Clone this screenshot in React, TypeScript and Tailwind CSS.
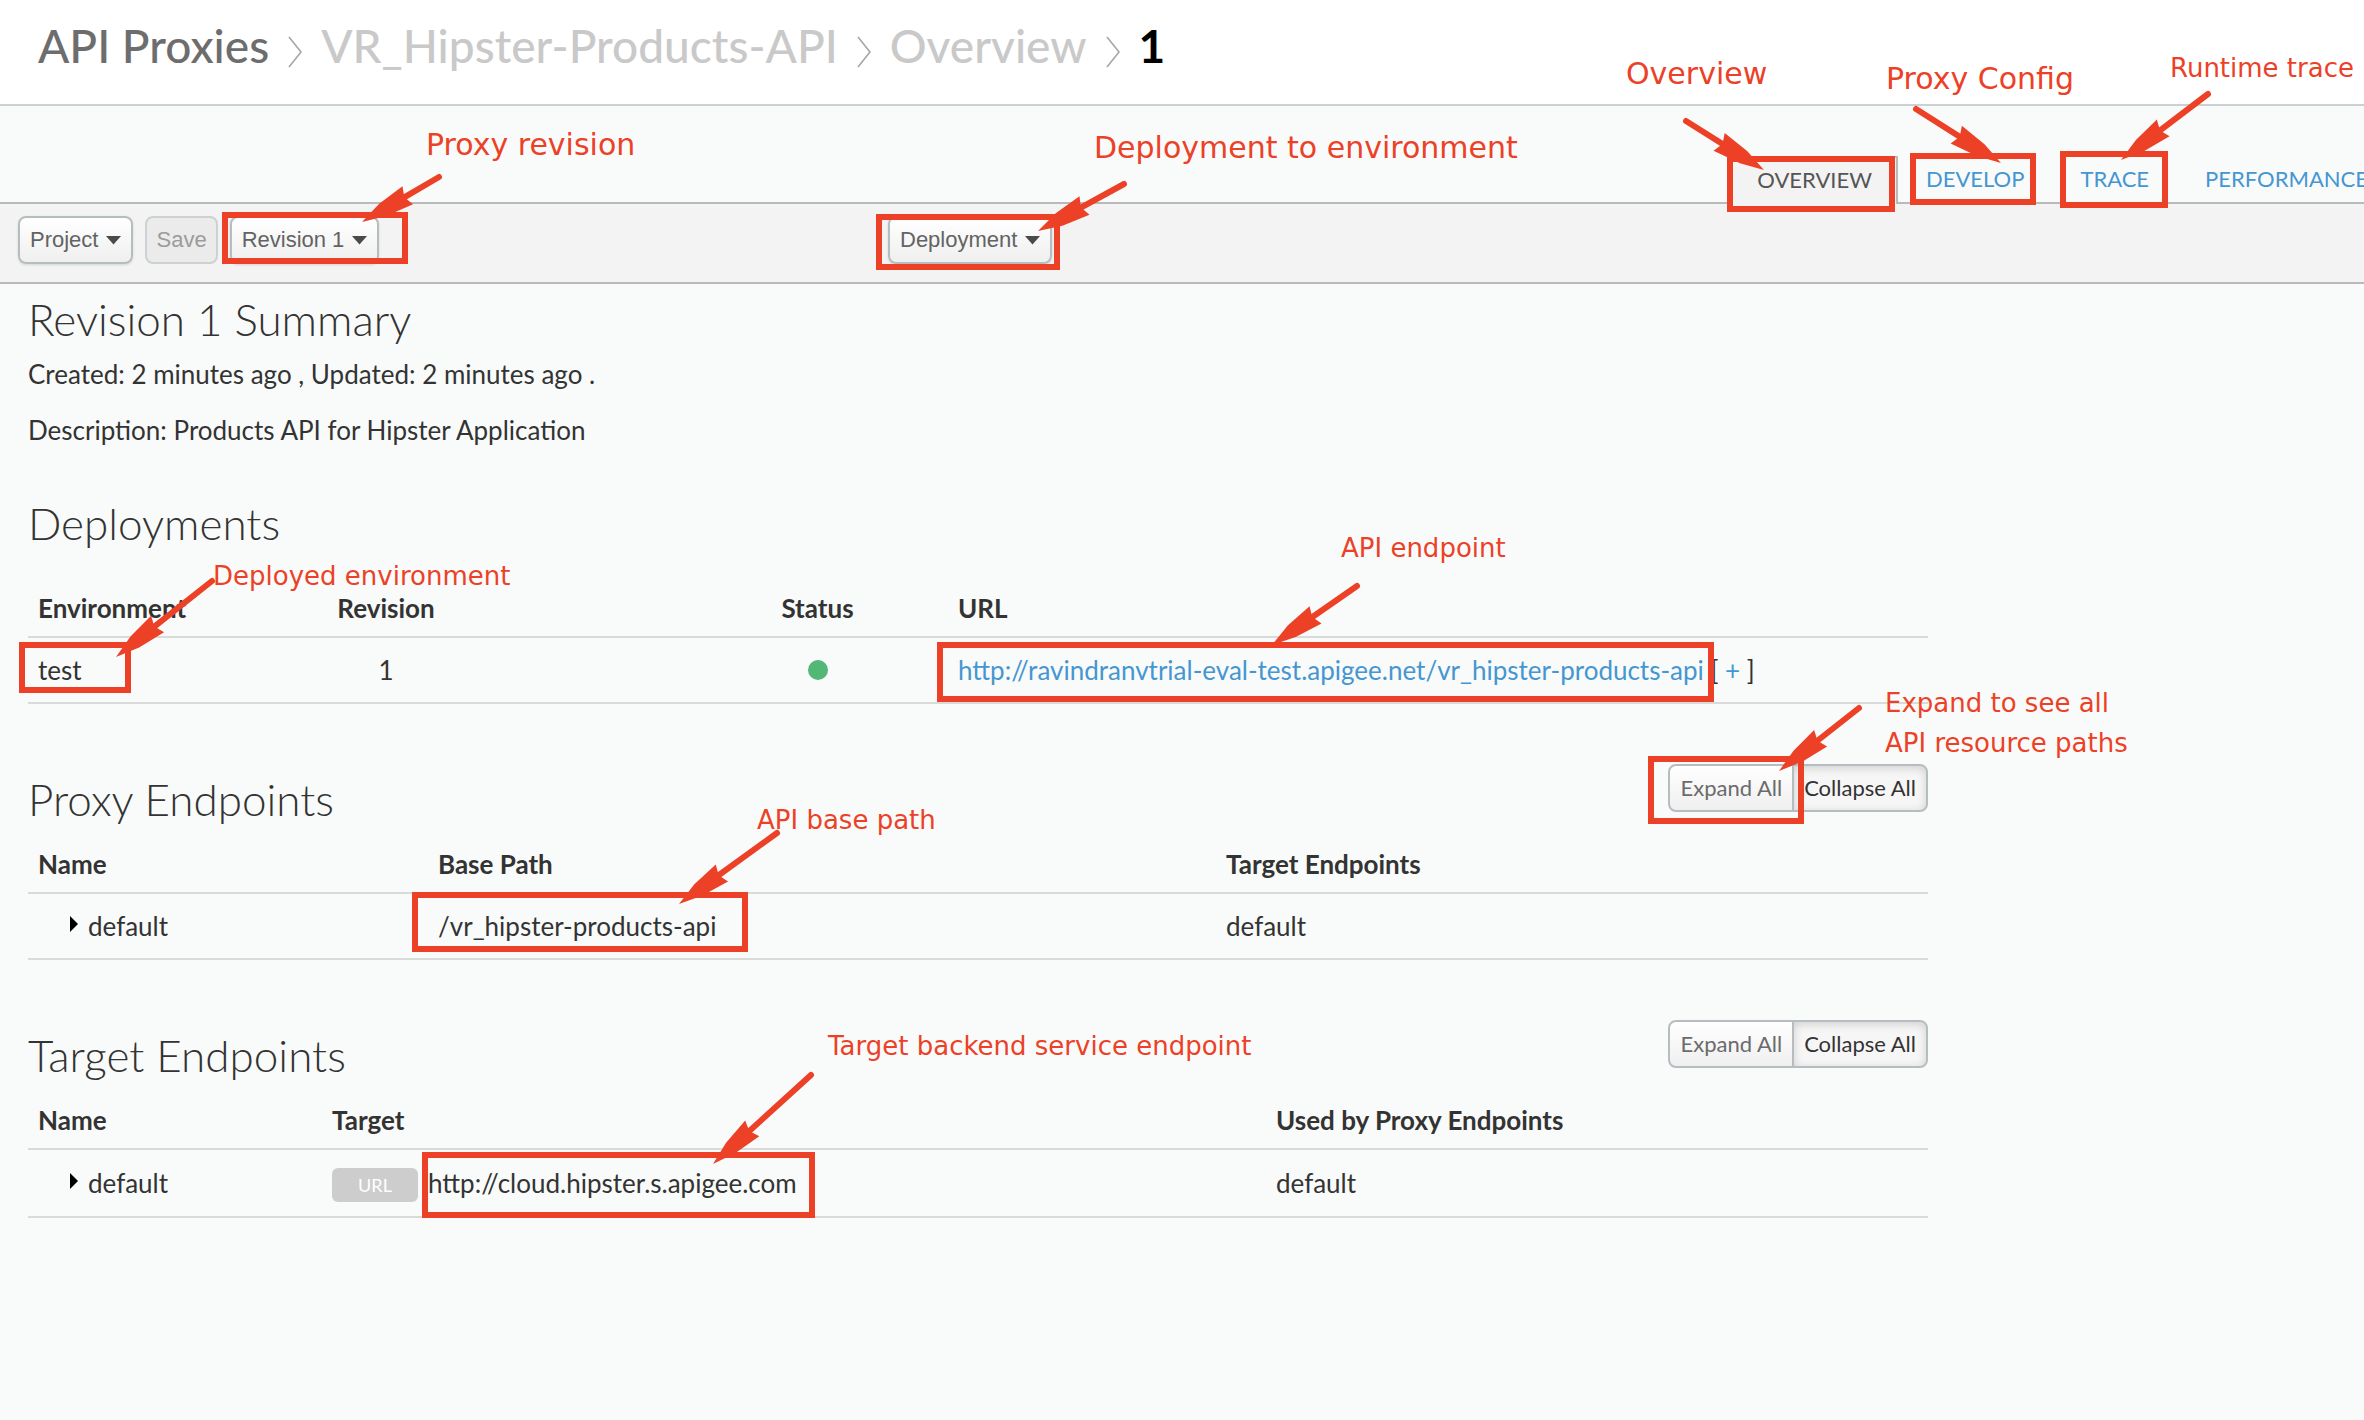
import type { ReactNode } from "react";

function Chevron() {
  return (
    <svg className="mt-3 mr-[18px] ml-[18px] shrink-0" width="16" height="32" viewBox="0 0 16 32" aria-hidden="true">
      <path d="M2 1 14 16 2 31" fill="none" stroke="#a6a6a6" strokeWidth="1.6" />
    </svg>
  );
}

function MenuButton({ label }: { label: string }) {
  return (
    <button
      type="button"
      aria-haspopup="menu"
      className="flex h-12 items-center gap-2 rounded-lg border-2 border-[#b6bdc0] bg-linear-to-b from-white to-[#efefef] px-2.5 text-[#636363] shadow-sm"
    >
      {label}
      <svg width="15" height="9" viewBox="0 0 15 9" aria-hidden="true">
        <path d="M0 0H15L7.5 8.5Z" fill="#4a4a4a" />
      </svg>
    </button>
  );
}

function SectionHeading({ title }: { title: string }) {
  return (
    <div className="mt-[60px] flex h-[63px] items-start justify-between">
      <h2 className="self-end text-[44px] leading-[56px] font-light">{title}</h2>
      <div className="flex text-[22px] leading-7">
        <button
          type="button"
          className="h-12 rounded-l-lg border-2 border-[#b6bdc0] bg-linear-to-b from-white to-[#efefef] px-2.5 text-[#6b6b6b]"
        >
          Expand All
        </button>
        <button
          type="button"
          className="-ml-0.5 h-12 rounded-r-lg border-2 border-[#b6bdc0] bg-[#f7f6f7] px-2.5 text-[#333] shadow-[inset_0_2px_10px_rgba(0,0,0,0.16)]"
        >
          Collapse All
        </button>
      </div>
    </div>
  );
}

const tableStyle = "w-full table-fixed border-collapse text-left";
const headRow = "border-b-2 border-[#d9dbdb]";
const th = "px-2.5 pb-2.5 font-bold";
const td = "px-2.5 py-3.5";

function Disclosure({ children }: { children: ReactNode }) {
  return (
    <button type="button" aria-expanded="false" className="flex items-center gap-2.5 pl-8">
      <svg className="mb-1" width="8" height="16" viewBox="0 0 8 16" aria-hidden="true">
        <path d="M0 0 8 8 0 16Z" fill="#000" />
      </svg>
      {children}
    </button>
  );
}

const boxes = [
  "left-[222px] top-[212px] h-[52px] w-[186px]",
  "left-[876px] top-[214px] h-[56px] w-[184px]",
  "left-[1727px] top-[156px] h-[56px] w-[168px]",
  "left-[1910px] top-[153px] h-[52px] w-[126px]",
  "left-[2060px] top-[151px] h-[57px] w-[108px]",
  "left-[19px] top-[642px] h-[51px] w-[112px]",
  "left-[937px] top-[642px] h-[60px] w-[777px]",
  "left-[1648px] top-[756px] h-[68px] w-[156px]",
  "left-[412px] top-[892px] h-[60px] w-[336px]",
  "left-[422px] top-[1152px] h-[66px] w-[393px]",
];

const notes = [
  { text: "Proxy revision", at: "left-[426px] top-[127px] text-[30px]" },
  { text: "Deployment to environment", at: "left-[1094px] top-[130px] text-[30px]" },
  { text: "Overview", at: "left-[1626px] top-[56px] text-[30px]" },
  { text: "Proxy Config", at: "left-[1886px] top-[61px] text-[30px]" },
  { text: "Runtime trace", at: "left-[2170px] top-[50px] text-[26px]" },
  { text: "Deployed environment", at: "left-[213px] top-[558px] text-[26px]" },
  { text: "API endpoint", at: "left-[1341px] top-[530px] text-[26px]" },
  { text: "API base path", at: "left-[757px] top-[802px] text-[26px]" },
  { text: "Expand to see all", at: "left-[1885px] top-[685px] text-[26px]" },
  { text: "API resource paths", at: "left-[1885px] top-[725px] text-[26px]" },
  { text: "Target backend service endpoint", at: "left-[828px] top-[1028px] text-[26px]" },
];

// Each arrow runs from its tail (x1, y1) to its tip (x2, y2).
const arrows = [
  [439, 177, 362, 222],
  [1124, 184, 1038, 231],
  [1686, 121, 1764, 170],
  [1916, 109, 2001, 163],
  [2208, 94, 2121, 160],
  [212, 581, 116, 657],
  [1357, 586, 1272, 645],
  [777, 833, 679, 904],
  [1859, 708, 1779, 771],
  [811, 1075, 713, 1164],
];

function Arrow({ points }: { points: number[] }) {
  const [x1, y1, x2, y2] = points;
  const length = Math.hypot(x2 - x1, y2 - y1);
  const ux = (x2 - x1) / length;
  const uy = (y2 - y1) / length;
  const at = (back: number, side: number) => `${x2 - ux * back - uy * side},${y2 - uy * back + ux * side}`;
  return (
    <g>
      <line x1={x1} y1={y1} x2={x2 - ux * 40} y2={y2 - uy * 40} stroke="#ec4127" strokeWidth="6" strokeLinecap="round" />
      <polygon
        points={[at(0, 0), at(24, 7), at(53, 10.5), at(49, 0), at(53, -10.5), at(24, -7)].join(" ")}
        fill="#ec4127"
      />
    </g>
  );
}

function Annotations() {
  return (
    <div className="pointer-events-none absolute inset-0 overflow-hidden font-['DejaVu_Sans',sans-serif] leading-[36px] text-[#ec4127]">
      {boxes.map((box) => (
        <div key={box} className={`absolute border-6 border-[#ec4127] ${box}`} />
      ))}
      <svg className="absolute inset-0 h-full w-full" aria-hidden="true">
        {arrows.map((points) => (
          <Arrow key={points.join()} points={points} />
        ))}
      </svg>
      {notes.map((note) => (
        <p key={note.text} className={`absolute whitespace-nowrap ${note.at}`}>
          {note.text}
        </p>
      ))}
    </div>
  );
}

export default function App() {
  return (
    <div className="relative min-h-screen overflow-hidden bg-[#f9fbfa] font-[Lato,sans-serif] text-[26px] leading-[36px] text-[#333]">
      <header className="border-b-2 border-[#cdd0d0] bg-white pt-[18px] pb-[30px] pl-[38px]">
        <nav aria-label="Breadcrumb" className="flex items-center text-[46px] leading-[56px] font-medium text-[#c9c9c9]">
          <a href="#proxies" className="text-[#6d6d6d]">API Proxies</a>
          <Chevron />
          <a href="#proxy">VR_Hipster-Products-API</a>
          <Chevron />
          <a href="#overview">Overview</a>
          <Chevron />
          <span className="font-bold text-black">1</span>
        </nav>
      </header>

      <nav aria-label="Proxy views" className="-mr-1 flex h-[98px] items-end justify-end border-b-2 border-[#b9bbbb] text-[22px] leading-[46px] text-[#4596d1]">
        <a href="#overview" aria-current="page" className="-mb-0.5 h-12 border-2 border-b-0 border-[#b9bbbb] bg-[#f3f3f3] px-6 leading-[44px] text-[#555]">
          OVERVIEW
        </a>
        <a href="#develop" className="px-7">DEVELOP</a>
        <a href="#trace" className="px-7">TRACE</a>
        <a href="#performance" className="pl-7">PERFORMANCE</a>
      </nav>

      <div className="flex border-b-2 border-[#b9bbbb] bg-[#f3f3f3] pt-3 pb-[18px] pl-[18px] font-['Liberation_Sans',sans-serif] text-[22px] leading-7">
        <div className="flex w-[870px] gap-3">
          <MenuButton label="Project" />
          <button type="button" disabled className="h-12 rounded-lg border-2 border-[#ccd1d3] bg-[#ebebeb] px-[9px] text-[#9b9b9b]">
            Save
          </button>
          <MenuButton label="Revision 1" />
        </div>
        <MenuButton label="Deployment" />
      </div>

      <main className="max-w-[1956px] px-7 pt-[7px]">
        <h2 className="text-[44px] leading-[56px] font-light">Revision 1 Summary</h2>
        <p className="mt-[9px]">Created: 2 minutes ago , Updated: 2 minutes ago .</p>
        <p className="mt-5">Description: Products API for Hipster Application</p>

        <h2 className="mt-[47px] text-[44px] leading-[56px] font-light">Deployments</h2>
        <table className={`${tableStyle} mt-[39px]`}>
          <thead>
            <tr className={headRow}>
              <th className={`${th} w-[257px]`}>Environment</th>
              <th className={`${th} w-[402px]`}>
                <div className="w-[182px] text-center">Revision</div>
              </th>
              <th className={`${th} w-[261px] text-center`}>Status</th>
              <th className={th}>URL</th>
            </tr>
          </thead>
          <tbody>
            <tr className={headRow}>
              <td className={td}>test</td>
              <td className={td}>
                <div className="w-[182px] text-center">1</div>
              </td>
              <td className={td}>
                <div role="img" aria-label="Deployed" className="mx-auto size-5 rounded-full bg-[#53b776]" />
              </td>
              <td className={td}>
                <a href="#endpoint" className="text-[#4596d1]">http://ravindranvtrial-eval-test.apigee.net/vr_hipster-products-api</a>
                {" [ "}
                <a href="#more" className="text-[#4596d1]">+</a>
                {" ]"}
              </td>
            </tr>
          </tbody>
        </table>

        <SectionHeading title="Proxy Endpoints" />
        <table className={`${tableStyle} mt-[19px]`}>
          <thead>
            <tr className={headRow}>
              <th className={`${th} w-[400px]`}>Name</th>
              <th className={`${th} w-[788px]`}>Base Path</th>
              <th className={th}>Target Endpoints</th>
            </tr>
          </thead>
          <tbody>
            <tr className={headRow}>
              <td className={td}><Disclosure>default</Disclosure></td>
              <td className={td}>/vr_hipster-products-api</td>
              <td className={td}>default</td>
            </tr>
          </tbody>
        </table>

        <SectionHeading title="Target Endpoints" />
        <table className={`${tableStyle} mt-[19px]`}>
          <thead>
            <tr className={headRow}>
              <th className={`${th} w-[294px]`}>Name</th>
              <th className={`${th} w-[944px]`}>Target</th>
              <th className={th}>Used by Proxy Endpoints</th>
            </tr>
          </thead>
          <tbody>
            <tr className={headRow}>
              <td className={td}><Disclosure>default</Disclosure></td>
              <td className={td}>
                <div className="flex items-center gap-2.5">
                  <span className="mt-1 w-[86px] rounded-md bg-[#cdcdcd] text-center text-[18px] leading-[34px] text-white">URL</span>
                  http://cloud.hipster.s.apigee.com
                </div>
              </td>
              <td className={td}>default</td>
            </tr>
          </tbody>
        </table>
      </main>

      <Annotations />
    </div>
  );
}
